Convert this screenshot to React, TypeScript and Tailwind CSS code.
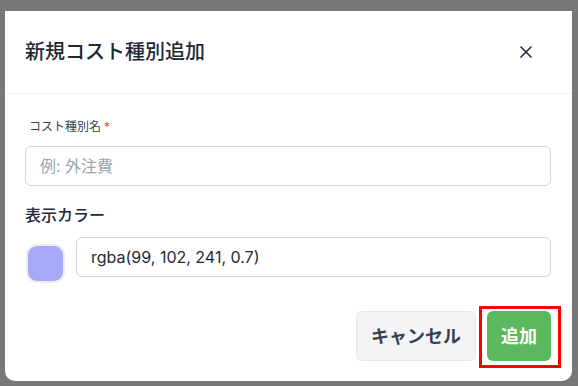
const font = "font-['Inter','Noto_Sans_CJK_JP',sans-serif]";

function CloseIcon() {
  return (
    <svg width="12" height="12" viewBox="0 0 12 12" fill="none" stroke="#1f2937" strokeWidth="1.6" strokeLinecap="round">
      <path d="M1 1L11 11" />
      <path d="M11 1L1 11" />
    </svg>
  );
}

export default function App() {
  return (
    <div className={`relative w-[578px] h-[386px] overflow-hidden bg-[#787878] ${font}`}>
      <div className="pt-[11px] pl-[5px]">
        <div className="w-[567px] h-[370px] bg-white rounded-b-[10px] flex flex-col">
          {/* header */}
          <div className="h-[83px] flex items-center justify-between pl-5 pr-[40px] border-b border-[#f0f0f0]">
            <h2 className="text-[20px] font-medium text-[#1f2937] leading-none">新規コスト種別追加</h2>
            <button className="flex items-center justify-center">
              <CloseIcon />
            </button>
          </div>

          {/* body */}
          <div className="pl-5 pr-[21px] pt-[24px]">
            <label className="block ml-1 h-[18px] text-[12px] leading-[18px] text-[#374151]">
              コスト種別名<span className="text-[#ef4444] ml-[3px]">*</span>
            </label>
            <div className="mt-[10px] h-[40px] rounded-md border border-[#d4d4d8] flex items-center px-[14px]">
              <span className="text-[16px] text-[#9ca3af]">例: 外注費</span>
            </div>

            <div className="mt-[17px] h-[24px] text-[16px] leading-[24px] font-medium text-[#1f2937]">表示カラー</div>

            <div className="mt-[10px] flex items-start gap-[11px]">
              <div className="mt-[7px] ml-px w-[39px] h-[39px] rounded-[11px] border-2 border-[#eceef2] bg-[#a7a9f8]" />
              <div className="flex-1 h-[40px] rounded-md border border-[#d4d4d8] flex items-center px-[14px]">
                <span className="text-[16px] text-[#1f2937]">rgba(99, 102, 241, 0.7)</span>
              </div>
            </div>

            <div className="mt-[28px] flex justify-end gap-[11px]">
              <button className="h-[50px] px-[14px] rounded-md bg-[#f3f4f6] border border-[#e5e7eb] text-[18px] font-semibold text-[#374151]">
                キャンセル
              </button>
              <button className="h-[50px] w-[64px] rounded-md bg-[#5cb85c] text-[18px] font-semibold text-white">
                追加
              </button>
            </div>
          </div>
        </div>
      </div>

      {/* highlight annotation */}
      <div className="absolute left-[479px] top-[306px] w-[82px] h-[62px] border-[3px] border-[#ff0000]" />
    </div>
  );
}
